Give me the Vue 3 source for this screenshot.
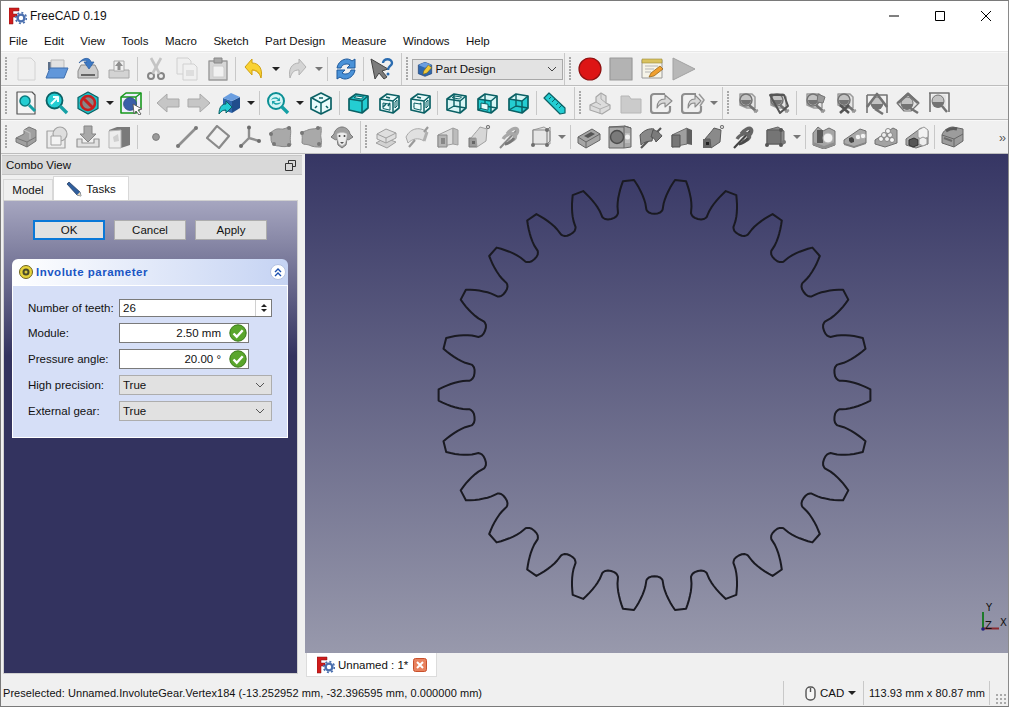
<script setup>
const P = (d, f = 'none', s = 'none', w = 1, da = null) => ({ d, f, s, w, da })
const C = (x, y, r) => `M${x - r} ${y}a${r} ${r} 0 1 0 ${2 * r} 0a${r} ${r} 0 1 0 ${-2 * r} 0z`

const T = '#24cdd2', TD = '#0b6165', G1 = '#e4e4e4', G2 = '#c2c2c2', G3 = '#9a9a9a', G4 = '#737373', G5 = '#555'

const view = (faces, wire = false) => {
  const F = 'M3 8L16 10V22L3 19z', Tp = 'M3 8L10 3L22 5L16 10z', R = 'M16 10L22 5V17L16 22z'
  const back = wire ? [P('M10 3V15L3 19M10 15L22 17', 'none', TD, 1.4)] : []
  const inner = {
    F: P(F, T), T: P(Tp, T), R: P(R, T),
    f: P('M6 12l7 1.2v6L6 17.5z', '#e9fbfb', TD, 1), t: P('M8 6.6l2.6-1.6 7 1-2.4 2z', '#e9fbfb', TD, 1),
    r: P('M18 11l2-2v6l-2 2z', '#e9fbfb', TD, 1),
    x: P('M6 16l3-3M13 12l-2 3M9 6l4 1', 'none', TD, 1.6)
  }
  return [P(F, wire ? '#d8f6f6' : '#eafafa'), P(Tp, wire ? '#d8f6f6' : '#eafafa'), P(R, wire ? '#d8f6f6' : '#eafafa'),
    ...faces.map(k => inner[k]), ...back,
    P('M3 8L10 3L22 5V17L16 22L3 19z', 'none', TD, 1.7), P('M3 8L16 10L22 5M16 10V22', 'none', TD, 1.5)]
}
const attach = (shape) => [P('M4 3h12l3 3v11h-8l-7-3z', G1, G3, 1.5), P(C(10, 9, 6), G2, G4, 1.5), P('M5 9h10a5 5 0 0 1-10 0z', G4), P('M13 14l8 7', 'none', G4, 2.5), P('M18 21l4-2', 'none', G3, 2), ...shape]

const icons = {
  new: [P('M4 1h13l4 4v18H4z', '#efefef', '#d2d2d2')],
  open: [P('M3 5h6l2 2h8v6H3z', '#5d6f88'), P('M6 3h13v9H6z', '#e2e2e2', '#bbb'), P('M1 21l4-10h18l-4 10z', '#6197da', '#3f6fae')],
  save: [P('M2 14l3-6h14l3 6v7H2z', '#cdcdcd', '#8a8a8a'), P('M5 17h14v2H5z', '#666'), P('M3 6C7 0 14 0 15 5h3l-5 7-5-7h3C10 3 6 3 3 6z', '#3b78c4', '#2a5a9c', .7)],
  print: [P('M2 13h20v8H2z', '#d3d3d3', '#a8a8a8'), P('M7 4h10v10H7z', '#f0f0f0', '#aaa'), P('M12 4l-4 5h2.5v4h3V9H16z', '#8e8e8e')],
  cut: [P(C(7, 19, 3), 'none', '#858585', 2), P(C(17, 19, 3), 'none', '#858585', 2), P('M8.5 16.5L17 1', 'none', '#c4c4c4', 2.6), P('M15.5 16.5L7 1', 'none', '#c4c4c4', 2.6)],
  copy: [P('M2 1h11l3 3v13H2z', '#efefef', '#d0d0d0'), P('M8 7h11l3 3v13H8z', '#f0f0f0', '#d0d0d0'), P('M11 13h8v6h-8z', '#dedede')],
  paste: [P('M3 4h18v19H3z', '#d6d6d6', '#9a9a9a', 1.4), P('M8 1h8v5H8z', '#a8a8a8', '#888'), P('M7 9h10l1 2v9H7z', '#f1f1f1', '#ccc')],
  undo: [P('M3 10L10 2v4c7 0 11 6 9 15-2-6-4-8-9-8v5z', '#f9d232', '#cfa011'), P('M10 13c3 0 6 2 8 5', 'none', '#e0b020', 1)],
  redo: [P('M21 10L14 2v4c-7 0-11 6-9 15 2-6 4-8 9-8v5z', '#d4d4d4', '#b2b2b2')],
  refresh: [P('M3 11C4 5 9 2 13 2c2 0 4 1 5 2l3-2v9h-8l3-3c-3-2-8-1-9 3z', '#4a92d8', '#1f5a9c'), P('M21 13c-1 6-6 9-10 9-2 0-4-1-5-2l-3 2v-9h8l-3 3c3 2 8 1 9-3z', '#4a92d8', '#1f5a9c')],
  whats: [P('M1 2l4 20 4-6 5 6 3-2-5-6 6-2z', '#7c7c7c', '#444'), P('M13 6c0-5 9-5 9 0 0 3-4 3-4 7', 'none', '#2b6cb0', 2.4), P(C(18, 17, 1.5), '#2b6cb0')],
  record: [P(C(12, 12, 11), '#dd1515', '#8e1010', 1.2)],
  stop: [P('M1 1h22v22H1z', '#b3b3b3', '#9a9a9a', 1.2)],
  macro: [P('M2 3h20v18H2z', '#f6f4e8', '#9a9a9a'), P('M2 2h20v4H2z', '#d9c25f', '#9c8a3a', .6), P('M5 9h13M5 12h9M5 15h6', 'none', '#b5b5b5', 1), P('M9 20l2-4 9-7 3 3-9 7z', '#f0a030', '#8a5a10', .7)],
  play: [P('M2 1l22 11L2 23z', '#b8b8b8', '#a2a2a2')],

  fitdoc: [P('M3 1h15l3 3v19H3z', '#f4f4f4', '#555', 1.2), P(C(11, 10, 5), T, '#0a7a7e', 1.5), P('M15 14l6 6', 'none', '#12a0a5', 3)],
  fitsel: [P(C(9.5, 9.5, 8), T, TD, 1.8), P('M6 13l7-7M8 6h5v5', 'none', '#f2ffff', 2), P('M15 15l7 7', 'none', '#15a0a5', 3.4)],
  draw: [P('M12 1l10 5.5v11L12 23 2 17.5v-11z', '#1ec0c6', TD, 1.2), P(C(12, 12, 7), '#888', '#c81e1e', 2.6), P('M7 7l10 10', 'none', '#c81e1e', 3)],
  selbox: [P('M2 6l5-4h15v15l-5 5H2z', '#eef', '#17981c', 1.6), P('M2 6h15v16M17 6l5-4', 'none', '#17981c', 1.4), P(C(11, 13, 6.5), '#3a5fa8', '#223a6c', .6), P('M14 13l9 5-4 1 3 4-2 1-3-4-2 3z', '#fff', '#555', .9)],
  back: [P('M1 12l10-9v5h12v8H11v5z', '#c6c6c6', '#a9a9a9')],
  fwd: [P('M23 12L13 3v5H1v8h12v5z', '#c6c6c6', '#a9a9a9')],
  stdview: [P('M5 7l9 3v12l-9-3z', '#2f68ae'), P('M14 10l8-4v11l-8 5z', '#214e8c'), P('M5 7l8-5 9 4-8 4z', '#6a9ee0'), P('M1 23c0-7 3-10 7-10v-3l6 6-6 6v-3c-3 0-5 1-7 4z', T, TD, 1)],
  sync: [P(C(10, 10, 8), '#d4f5f5', '#0b8f94', 2), P('M5 9c1-3 6-4 8-1l1-2v4h-4l2-1c-2-2-5-1-7 0z', '#1ba5aa'), P('M15 11c-1 3-6 4-8 1l-1 2v-4h4l-2 1c2 2 5 1 7 0z', '#1ba5aa'), P('M15.5 15.5l6.5 6.5', 'none', '#15a0a5', 3.4)],
  iso: [P('M12 2l10 5v11l-10 5-10-5V7z', '#e9fbfb', TD, 1.7), P('M3 7l9 5 9-5M12 12v10', 'none', TD, 1.5), P('M6 17l2-2M17 15l2 2M10 7l4 0', 'none', TD, 1.6)],
  front: view(['F', 'T', 'R', 't']),
  top: view(['f', 'r', 'x']),
  right: view(['r', 'x', 'f']),
  rear: view(['t'], true),
  bottom: [...view(['F'], true), P('M6 12l7 1.2v6L6 17.5z', '#e9fbfb', TD, 1)],
  left: view(['R', 'F'], true),
  measure: [P('M1 7l5-5 16 15v5l-5 1z', T, TD, 1.2), P('M6 8l2-2M9 11l3-3M13 14l2-2M16 17l3-3', 'none', TD, 1)],

  lbody: [P('M2 14l6-3V6l5-4 5 3v7l4 2v4l-8 5-12-4z', '#dcdcdc', '#a8a8a8', 1.2), P('M2 14l10 4 10-4M12 18v5M8 11l5 3M13 2v6l5 4', 'none', '#a8a8a8', .9)],
  folder: [P('M2 5h8l2 3h10v14H2z', '#cbcbcb', '#b6b6b6')],
  link: [P('M4 3h11M4 3a3 3 0 0 0-3 3v13a3 3 0 0 0 3 3h13a3 3 0 0 0 3-3v-4', 'none', '#8e8e8e', 2.2), P('M7 17c0-6 3-9 8-9V4l7 6-7 6v-4c-4 0-6 1-8 5z', '#d7d7d7', '#8a8a8a', 1.1)],
  linkx: [P('M4 3h11M4 3a3 3 0 0 0-3 3v13a3 3 0 0 0 3 3h13a3 3 0 0 0 3-3v-4', 'none', '#8e8e8e', 2.2), P('M7 17c0-6 3-9 7-9V4l6 6-6 6v-4c-4 0-5 1-7 5z', '#d7d7d7', '#8a8a8a', 1.1), P('M18 3l5 6-4 6', 'none', '#9a9a9a', 1.6)],
  at1: attach([]),
  at2: attach([P('M3 4h14l4 11-8 7z', 'none', G5, 2)]),
  at3: attach([P('M15 3l7 3-2 6-6-1z', G3, G4, 1)]),
  at4: attach([P('M6 14l9 8M15 14l-9 8', 'none', G5, 2.6)]),
  at5: [P('M2 4h20v18', 'none', G4, 1.6), P('M2 22V4', 'none', G4, 1.6), P(C(12, 12, 6), G2, G4, 1), P('M6 13h12a6 6 0 0 1-12 0z', G4), P('M2 16L12 3l10 13', 'none', G4, 2.6), P('M10 18l8 5', 'none', G4, 2.5)],
  at6: [P('M1 12L12 2l11 10-8 8H8z', G1, G4, 1.2), P(C(11, 12, 6), G2, G4, 1), P('M5 13h12a6 6 0 0 1-12 0z', G4), P('M2 12L12 3l10 9', 'none', G4, 2.6), P('M14 17l8 5', 'none', G4, 2.5)],
  at7: [P('M2 2h20v19', 'none', G4, 1.6), P('M3 2v19', 'none', G4, 1.6), P('M5 4h14v12H5z', G1), P(C(11, 10, 6), G2, G4, 1), P('M5 11h12a6 6 0 0 1-12 0z', G4), P('M15 15l5 6', 'none', G4, 2.5)],

  dbody: [P('M2 13l8-4V5l5-3 7 3v11l-9 6-11-5z', '#a0a0a0', '#777', 1), P('M2 13l11 4 9-5M13 17v5', 'none', '#777', 1), P('M10 5l6 3v6', 'none', '#c0c0c0', 1.2)],
  part: [P('M2 6h15l3 3v14H2z', '#ececec', '#a2a2a2', 1.2), P(C(15, 9, 7), '#dedede', '#a2a2a2', 1.2), P('M6 11h10v9H6z', '#f4f4f4', '#a2a2a2', 1)],
  import: [P('M1 14v8h22v-8h-5v4H6v-4z', '#e2e2e2', '#969696', 1.2), P('M8 1h8v8h4l-8 8-8-8h4z', '#a8a8a8', '#858585', 1)],
  clone: [P('M2 5l8-3h13v18l-9 3H2z', '#7a7a7a'), P('M2 6l12-1v18H2z', '#ededed', '#b5b5b5'), P('M6 12l5-3 1 7-5 1z', '#cfcfcf')],
  point: [P(C(12, 12, 3.4), '#9a9a9a', '#7d7d7d')],
  line: [P('M3 21L21 3', 'none', '#909090', 2.6), P(C(3, 21, 2), '#777'), P(C(21, 3, 2), '#777')],
  diamond: [P('M11 1L23 11 13 23 1 13z', 'none', '#8a8a8a', 2.2), P('M11 5L19 11.5 13 19 5 13z', '#f1f1f1')],
  csys: [P('M12 13V2M12 13l-8 8M12 13l10 3', 'none', '#8f8f8f', 2.4), P(C(12, 2.5, 2), '#6d6d6d'), P(C(4, 21, 2), '#6d6d6d'), P(C(22, 16, 2), '#6d6d6d')],
  shape1: [P('M2 8c3-2 6-5 10-4s7-2 10-2c2 6-1 10 1 18-4 2-8 2-12 1-3 0-6-1-7-3-2-3 0-7-2-10z', '#a9a9a9', '#8a8a8a'), P(C(3, 9, 2), '#777'), P(C(21, 3, 2), '#777'), P(C(21, 20, 2), '#777'), P(C(6, 19, 2), '#777')],
  shape2: [P('M2 7c4 0 7-3 11-3 3 0 6-1 9-2 1 5-1 8 0 11 1 4 0 6 0 9-5 0-8 0-12-2-3-1-5 0-7-2 0-4 1-7-1-11z', '#a9a9a9', '#8a8a8a'), P(C(3, 8, 2), '#777'), P(C(19, 3, 2), '#777'), P(C(20, 19, 2), '#777')],
  sheep: [P('M4 9c1-5 5-7 8-7s7 2 8 7l3 3-3 2c-1 1-2 1-3 0l-1 6-4 3-4-3-1-6c-1 1-2 1-3 0l-3-2z', '#a0a0a0', '#777'), P('M7 9c2-2 8-2 10 0 0 4-1 7-2 10l-3 2-3-2c-1-3-2-6-2-10z', '#ededed', '#bbb', .6), P(C(9.5, 11, 1), '#444'), P(C(14.5, 11, 1), '#444'), P('M10 17h4l-2 2z', '#555')],

  lpad: [P('M2 18l9-5 11 4-9 6z', '#d2d2d2', '#9f9f9f'), P('M3 9l9-5 10 4v5l-10 5-9-4z', '#dfdfdf', '#9f9f9f'), P('M3 9l9 4 10-5M12 13v5', 'none', '#9f9f9f', 1)],
  lrev: [P('M1 12C6 2 16 2 22 7l-3 9c-6-4-12-2-16 2z', '#e0e0e0', '#a8a8a8'), P('M4 22l6-7M19 7l4-5', 'none', '#9a9a9a', 2.2), P('M22 7l-3 9', 'none', '#b0b0b0', 3)],
  lloft: [P('M2 10l15-7v16l-15 3z', '#dcdcdc', '#a0a0a0'), P('M17 3l5 2v15l-5-1z', '#bcbcbc', '#a0a0a0'), P('M2 10h9v12H2z', '#b5b5b5', '#888'), P('M5 13h4v6H5z', '#878787')],
  lpipe: [P('M2 13h8v9H2z', '#9b9b9b', '#777'), P('M4 13c4-5 7-8 9-11l7 2-1 12-9 6-1-9z', '#d7d7d7', '#a0a0a0'), P('M5 16h3v3H5z', '#666'), P(C(21, 2, 1.7), '#d0d0d0', '#777')],
  lhelix: [P('M2 23l18-19', 'none', '#8a8a8a', 2), P('M5 14c3-5 10-7 12-4s-3 7-7 6M9 9c3-4 8-7 10-5s-1 7-4 8', 'none', '#a8a8a8', 3.2), P('M7 19c3 0 7-3 9-6', 'none', '#777', 3)],
  lprim: [P('M4 5l11-3 6 4v13H4z', '#e2e2e2', '#9c9c9c'), P('M4 5h14v14H4z', '#e6e6e6', '#8a8a8a', 1.2), P('M18 5l3-3v14l-3 3', 'none', '#8a8a8a', 1), P(C(4, 20, 2), '#6e6e6e'), P(C(18, 20, 2), '#6e6e6e'), P(C(18, 5, 2), '#6e6e6e')],
  dpocket: [P('M1 12L15 4l8 5v6L9 23l-8-5z', '#a5a5a5', '#666'), P('M1 12l8 5 14-8M9 17v6', 'none', '#666', 1), P('M7 11l7-4 4 2-7 4z', '#555')],
  dhole: [P('M1 2l16-1 6 2v19l-7 1H1z', '#a9a9a9', '#666'), P('M1 2h15v21', 'none', '#666', 1), P('M16 1l7 2', 'none', '#666', 1), P(C(9, 12, 6.5), '#7a7a7a', '#4d4d4d', 1.4), P('M17 8h5v10h-5z', '#bdbdbd'), P(C(19.5, 12, 2.5), '#f0f0f0')],
  dgroove: [P('M2 23l20-20', 'none', '#555', 2.2), P('M1 10c4-5 10-7 14-6l-2 12c-4 0-8 1-11 4z', '#888', '#555'), P('M14 5c3 0 7 3 9 6l-6 6c-1-3-3-5-5-5z', '#7a7a7a', '#555')],
  dloft: [P('M2 10l15-7v16l-15 3z', '#9f9f9f', '#6d6d6d'), P('M17 3l5 2v15l-5-1z', '#5f5f5f'), P('M2 10h8v12H2z', '#777', '#555')],
  dpipe: [P('M2 14h8v9H2z', '#666'), P('M4 14c4-5 7-8 9-11l7 2-1 12-9 6-1-9z', '#8a8a8a', '#5a5a5a'), P('M5 17h3v3H5z', '#222'), P(C(21, 2, 1.7), '#d0d0d0', '#777')],
  dhelix: [P('M2 23l18-19', 'none', '#444', 2.2), P('M5 14c3-5 10-7 12-4s-3 7-7 6M9 9c3-4 8-7 10-5s-1 7-4 8', 'none', '#666', 3.4), P('M7 19c3 0 7-3 9-6', 'none', '#4a4a4a', 3)],
  dprim: [P('M4 5l11-3 6 4v13H4z', '#8d8d8d', '#666'), P('M4 5h14v14H4z', '#757575', '#5a5a5a', 1), P(C(4, 20, 2), '#555'), P(C(18, 20, 2), '#555'), P(C(18, 5, 2), '#555'), P(C(21, 17, 2), '#777')],
  b1: [P('M1 20V8l5-6 5 4 6-3 6 3v14l-11 4z', '#a6a6a6', '#707070'), P('M5 5h6v13H5z', '#585858'), P(C(16, 13, 5), '#f0f0f0', '#b0b0b0'), P('M1 17l11 4 11-4v3l-11 4-11-4z', '#8f8f8f')],
  b2: [P('M1 15l16-11 6 2v12L11 22 1 19z', '#a8a8a8', '#707070'), P('M6 13l3-1 2 2v3l-3 1-2-2z', '#444'), P(C(15, 12, 2.8), '#f3f3f3', '#aaa'), P(C(20, 11, 2.8), '#f3f3f3', '#aaa'), P('M1 18l10 3 12-4v2l-12 4-10-3z', '#858585')],
  b3: [P('M1 15L19 3l4 2v13l-12 4-10-3z', '#a3a3a3', '#707070'), P(C(7, 14, 2.5), '#f5f5f5', '#888'), P(C(13, 14, 2.5), '#efefef', '#888'), P(C(10, 10, 2.5), '#efefef', '#888'), P(C(16, 10, 2.5), '#efefef', '#888'), P(C(18, 15, 2.5), '#f5f5f5', '#888'), P(C(14, 6, 2.5), '#f5f5f5', '#888')],
  b4: [P('M1 14L16 3l7 3v13l-12 4-10-3z', '#a8a8a8', '#707070'), P('M13 5l6-3 4 3v7l-6 3-4-3z', '#f2f2f2', '#999'), P('M4 15l5-2 4 2v5l-5 2-4-2z', '#555', '#333'), P('M14 14l4-2 4 2v5l-4 2-4-2z', '#eee', '#999')],
  b5: [P('M1 10C2 6 7 2 12 2l10 2v12l-9 6-12-4z', '#9c9c9c', '#666'), P('M1 10l12 4 9-5', 'none', '#666', 1), P('M13 14v8', 'none', '#666', 1), P('M5 6c3-2 7-3 11-2', 'none', '#5a5a5a', 3), P('M3 13l8 3', 'none', '#6a6a6a', 2)]
}

const row = (str) => str.trim().split(/\s+/)
const rows = [
  [
    { items: row('new open save print | cut copy paste | undo v redo vd | refresh | whats'), cls: 'pad4' },
    { combo: true, cls: 'pad2' },
    { items: row('record stop macro play'), cls: 'grow' }
  ],
  [
    { items: row('fitdoc fitsel draw v selbox | back fwd stdview v | sync v iso | front top right | rear bottom left | measure'), cls: 'pad4' },
    { items: row('lbody folder link linkx vd'), cls: 'pad2' },
    { items: row('at1 at2 | at3 at4 at5 at6 at7'), cls: 'grow' }
  ],
  [
    { items: row('dbody part import clone | point line diamond csys shape1 shape2 sheep'), cls: 'pad3' },
    { items: row('lpad lrev lloft lpipe lhelix lprim vd | dpocket dhole dgroove dloft dpipe dhelix dprim vd | b1 b2 b3 b4 | b5'), cls: 'grow', more: true }
  ]
]

const menus = ['File', 'Edit', 'View', 'Tools', 'Macro', 'Sketch', 'Part Design', 'Measure', 'Windows', 'Help']

// 26-tooth involute outline, module 2.5, 20 degree pressure angle
const cx = 349.5, cy = 241, Ro = 216, N = 26
const half = 180 / N
const Rp = Ro * 32.5 / 35, Rb = Rp * Math.cos(Math.PI / 9)
const inv = r => { const a = Math.acos(Rb / r); return (Math.tan(a) - a) * 180 / Math.PI }
const a0 = 90 / N + inv(Rp)
const flank = [[Rb - 3, a0 + .1], [Rb, a0], [192, a0 - inv(192)], [196, a0 - inv(196)], [200, a0 - inv(200)], [204, a0 - inv(204)], [208, a0 - inv(208)], [212, a0 - inv(212)], [Ro, a0 - inv(Ro)]]
const profile = [[181.3, -half], [181.6, -5.9], [182.6, -5.15], [184.2, -4.65],
  ...flank.map(([r, a]) => [r, -a]), ...flank.slice().reverse(),
  [184.2, 4.65], [182.6, 5.15], [181.6, 5.9]]
const pts = []
for (let k = 0; k < N; k++) {
  const c = (k + .5) * 2 * half
  for (const [r, a] of profile) {
    const t = (c + a) * Math.PI / 180
    pts.push(`${(cx + r * Math.sin(t)).toFixed(1)},${(cy - r * Math.cos(t)).toFixed(1)}`)
  }
}
const gear = pts.join(' ')
const fields = [
  { label: 'High precision:', value: 'True' },
  { label: 'External gear:', value: 'True' }
]
const quants = [
  { label: 'Module:', value: '2.50 mm' },
  { label: 'Pressure angle:', value: '20.00 °' }
]
</script>

<template>
  <div class="win">
    <div class="title">
      <svg class="logo" width="18" height="18" viewBox="0 0 18 18">
        <path d="M0 1h10v3H4v3h4v3H4v7H0z" fill="#d01c1c" stroke="#7d1010" stroke-width=".5" />
        <circle cx="12" cy="11" r="3.4" fill="#fff" stroke="#4a6fae" stroke-width="2.4" />
        <circle cx="12" cy="11" r="5.4" fill="none" stroke="#4a6fae" stroke-width="1.6" stroke-dasharray="2 2.2" />
      </svg>
      <span class="title-text">FreeCAD 0.19</span>
      <div class="caption">
        <svg width="12" height="12" viewBox="0 0 12 12"><path d="M1 6h10" stroke="#000" /></svg>
        <svg width="12" height="12" viewBox="0 0 12 12"><path d="M1.500 1.500h9v9h-9z" stroke="#000" fill="none" /></svg>
        <svg width="12" height="12" viewBox="0 0 12 12"><path d="M1 1l10 10M11 1L1 11" stroke="#000" fill="none" /></svg>
      </div>
    </div>
    <div class="menu"><span v-for="m in menus" :key="m">{{ m }}</span></div>

    <div v-for="(r, ri) in rows" :key="ri" class="tbrow">
      <div v-for="(tb, ti) in r" :key="ti" class="tb" :class="tb.cls">
        <i class="grip"></i>
        <div v-if="tb.combo" class="wb">
          <svg width="16" height="16" viewBox="0 0 24 24">
            <path d="M2 6l10-4 10 4v13l-10 4-10-4z" fill="#2f68ae" stroke="#1c3d70" />
            <path d="M2 6l10 4 10-4-10-4z" fill="#6a9ee0" />
            <path d="M10 15l7-9 5 4-7 8-6 2z" fill="#f0c93a" stroke="#6b5a14" stroke-width=".8" />
          </svg>
          <span>Part Design</span>
          <svg class="chev" width="10" height="6" viewBox="0 0 10 6"><path d="M1 1l4 4 4-4" fill="none" stroke="#444" /></svg>
        </div>
        <template v-for="(it, ii) in tb.items" :key="ii">
          <i v-if="it === '|'" class="sep"></i>
          <span v-else-if="it === 'v' || it === 'vd'" class="drop" :class="{ faded: it === 'vd' }"></span>
          <span v-else class="btn">
            <svg width="24" height="24" viewBox="0 0 24 24">
              <path v-for="(p, pi) in icons[it]" :key="pi" :d="p.d" :fill="p.f" :stroke="p.s" :stroke-width="p.w" :stroke-dasharray="p.da" stroke-linejoin="round" />
            </svg>
          </span>
        </template>
        <span v-if="tb.more" class="more">››</span>
      </div>
    </div>

    <div class="main">
      <aside class="left">
        <div class="dock-title">
          <span>Combo View</span>
          <svg width="11" height="11" viewBox="0 0 11 11"><path d="M3.500 3V.5h7v6H8M.5 3.500h7v7h-7z" fill="none" stroke="#333" /></svg>
        </div>
        <div class="tabs">
          <span class="tab">Model</span>
          <span class="tab on">
            <svg width="16" height="16" viewBox="0 0 16 16">
              <path d="M1 3l2-2 11 10 1 4-4-1z" fill="#2f5f9e" stroke="#1c3358" stroke-width=".7" />
              <path d="M11 14l3-3 1 4z" fill="#e8d8b8" />
            </svg>
            Tasks
          </span>
        </div>
        <div class="panel">
          <div class="dlg">
            <button class="b def">OK</button>
            <button class="b">Cancel</button>
            <button class="b">Apply</button>
          </div>
          <section class="box">
            <header class="box-h">
              <svg width="16" height="16" viewBox="0 0 16 16">
                <circle cx="8" cy="8" r="6.500" fill="#e6d23a" stroke="#6e6420" />
                <circle cx="8" cy="8" r="3.500" fill="#4a4a2a" />
                <circle cx="8" cy="8" r="1.500" fill="#d8c83a" />
              </svg>
              <b>Involute parameter</b>
              <span class="collapse">
                <svg width="10" height="10" viewBox="0 0 10 10"><path d="M2 5l3-3 3 3M2 9l3-3 3 3" fill="none" stroke="#1a4fb0" stroke-width="1.400" /></svg>
              </span>
            </header>
            <div class="form">
              <label>Number of teeth:</label>
              <div class="in spin">
                <span>26</span>
                <span class="arrows"><i class="up"></i><i class="dn"></i></span>
              </div>
              <template v-for="q in quants" :key="q.label">
                <label>{{ q.label }}</label>
                <div class="in q">
                  <span>{{ q.value }}</span>
                  <svg width="18" height="18" viewBox="0 0 18 18">
                    <circle cx="9" cy="9" r="8.200" fill="#5aa62c" stroke="#3a7a1a" />
                    <path d="M4.500 9.500l3.200 3.200 6-6.500" fill="none" stroke="#fff" stroke-width="2.400" />
                  </svg>
                </div>
              </template>
              <template v-for="f in fields" :key="f.label">
                <label>{{ f.label }}</label>
                <div class="in sel">
                  <span>{{ f.value }}</span>
                  <svg width="10" height="6" viewBox="0 0 10 6"><path d="M1 1l4 4 4-4" fill="none" stroke="#555" /></svg>
                </div>
              </template>
            </div>
          </section>
        </div>
      </aside>

      <div class="center">
        <div class="viewport">
          <svg width="703" height="499" viewBox="0 0 703 499">
            <polygon :points="gear" fill="none" stroke="#1a1a22" stroke-width="2" stroke-linejoin="round" />
            <path d="M678 458v17" stroke="#1d7a2a" stroke-width="2" />
            <path d="M678 474.500h16" stroke="#8a2a30" stroke-width="2" />
            <circle cx="678" cy="475" r="1.800" fill="#20207a" />
            <text x="681" y="457" class="axis">Y</text>
            <text x="680" y="475" class="axis">Z</text>
            <text x="695" y="472" class="axis">X</text>
          </svg>
        </div>
        <div class="doctabs">
          <span class="doctab">
            <svg width="18" height="18" viewBox="0 0 18 18">
              <path d="M0 1h10v3H4v3h4v3H4v7H0z" fill="#d01c1c" stroke="#7d1010" stroke-width=".5" />
              <circle cx="12" cy="11" r="3.400" fill="#fff" stroke="#4a6fae" stroke-width="2.400" />
              <circle cx="12" cy="11" r="5.400" fill="none" stroke="#4a6fae" stroke-width="1.600" stroke-dasharray="2 2.200" />
            </svg>
            <span>Unnamed : 1*</span>
            <svg width="14" height="14" viewBox="0 0 14 14">
              <rect x=".5" y=".5" width="13" height="13" rx="2" fill="#e8825e" stroke="#c8502c" />
              <path d="M4 4l6 6M10 4l-6 6" stroke="#fff" stroke-width="2" />
            </svg>
          </span>
        </div>
      </div>
    </div>

    <footer class="status">
      <span class="msg">Preselected: Unnamed.InvoluteGear.Vertex184 (-13.252952 mm, -32.396595 mm, 0.000000 mm)</span>
      <span class="cell nav">
        <svg width="11" height="15" viewBox="0 0 11 15"><rect x="1" y="1" width="9" height="13" rx="4" fill="#f6f6f6" stroke="#555" stroke-width="1.400" /><path d="M5.500 2v4" stroke="#555" stroke-width="1.400" /></svg>
        CAD
        <i class="caret"></i>
      </span>
      <span class="cell size">113.93 mm x 80.87 mm</span>
      <span class="sizegrip"></span>
    </footer>
  </div>
</template>

<style>
html, body { margin: 0; padding: 0; background: #f0f0f0; overflow: hidden; }
</style>

<style scoped>
.win {
  width: 1009px; height: 707px; box-sizing: border-box; border: 1px solid #7a7a7a; border-right-color: #8a8a8a;
  display: flex; flex-direction: column; background: #f0f0f0; overflow: hidden;
  font: 11.500px/16px "Liberation Sans", "Noto Sans CJK JP", sans-serif; color: #111;
}
.title { height: 30px; flex: none; background: #fff; display: flex; align-items: center; padding-left: 8px; }
.logo { margin-right: 3px; }
.title-text { color: #111; font-size: 12px; }
.caption { margin-left: auto; display: flex; gap: 34px; padding-right: 16px; }
.menu { height: 21px; flex: none; background: #fff; display: flex; gap: 16.500px; padding-left: 8px; align-items: center; border-bottom: 1px solid #e8e8e8; box-sizing: border-box; }
.tbrow { height: 34px; flex: none; display: flex; box-sizing: border-box; border-bottom: 1px solid #bdbdbd; border-top: 1px solid #f8f8f8; background: #f0f0f0; }
.tb { display: flex; align-items: center; border-right: 1px solid #c8c8c8; height: 100%; flex: none; }
.pad4 { padding-right: 3.500px; }
.pad3 { padding-right: 2.500px; }
.pad2 { padding-right: 1.500px; }
.grow { flex: 1; border-right: 0; position: relative; }
.grip { width: 9.500px; flex: none; height: 24px; box-sizing: border-box; padding: 0; background: radial-gradient(circle at 1px 1px, #a8a8a8 .8px, transparent 1px) 4px 0 / 3px 3px repeat-y; }
.btn { width: 31px; flex: none; height: 24px; display: flex; justify-content: center; }
.sep { width: 5.500px; flex: none; height: 24px; background: linear-gradient(#c8c8c8, #c8c8c8) center / 1px 100% no-repeat; }
.drop { width: 12px; flex: none; height: 4px; position: relative; }
.drop::after { content: ""; position: absolute; left: 2px; top: 0; border: 4px solid transparent; border-top: 4px solid #222; border-bottom: 0; }
.drop.faded::after { border-top-color: #777; }
.more { position: absolute; right: 3px; top: 9px; font-size: 12px; letter-spacing: -1px; color: #555; }
.wb { width: 151px; height: 21px; box-sizing: border-box; flex: none; border: 1px solid #a8a8a8; background: #e3e3e3; display: flex; align-items: center; padding-left: 4px; gap: 3px; }
.wb .chev { margin-left: auto; margin-right: 5px; }

.main { flex: 1; display: flex; min-height: 0; }
.left { width: 304px; flex: none; display: flex; flex-direction: column; }
.dock-title { height: 18px; margin: 1px 3px 0 1px; flex: none; background: #d9d9d9; border: 1px solid #c6c6c6; border-width: 1px 0; box-sizing: content-box; display: flex; align-items: center; justify-content: space-between; padding: 0 6px 0 4px; }
.tabs { height: 25px; flex: none; display: flex; align-items: flex-end; padding: 0 0 0 2px; margin-top: 0; box-sizing: content-box; }
.tab { height: 21px; width: 50px; box-sizing: border-box; border: 1px solid #d8d8d8; border-bottom: 0; background: #f0f0f0; display: flex; align-items: center; justify-content: center; }
.tab.on { height: 24px; width: 76px; background: #fff; gap: 4px; }
.panel { width: 295px; margin-left: 2px; box-sizing: border-box; height: 474px; flex: none; border: 1px solid #fff; outline: 1px solid #d0d0d0; outline-offset: -1px; background: linear-gradient(#a6a6c0, #33335f 155px); background-clip: padding-box; }
.dlg { display: flex; gap: 9px; padding: 19px 0 0 29px; }
.b { width: 72px; height: 20px; box-sizing: border-box; border: 1px solid #adadad; background: #e1e1e1; font: inherit; color: #111; padding: 0; }
.b.def { border: 2px solid #0a78d7; }
.box { margin: 19px 0 0 8px; width: 276px; }
.box-h { height: 26px; box-sizing: border-box; border-radius: 6px 6px 0 0; background: linear-gradient(90deg, #fff, #c5d3f3); display: flex; align-items: center; padding-left: 6px; gap: 2px; color: #1a55c4; letter-spacing: .5px; }
.box-h b { font-weight: 700; }
.collapse { margin-left: auto; margin-right: 2px; width: 16px; height: 16px; border-radius: 50%; background: #fff; border: 1px solid #b5c3e3; box-sizing: border-box; display: flex; align-items: center; justify-content: center; }
.form { display: grid; grid-template-columns: 91px 153px; grid-template-rows: 18px repeat(4, 20px); row-gap: 6px; align-items: center; padding: 13px 16px 16px 15px; background: #d6dff7; border: 1px solid #fff; border-top-color: #fff; }
.form label { white-space: nowrap; }
.in { height: 100%; box-sizing: border-box; border: 1px solid #7a7a7a; background: #fff; display: flex; align-items: center; padding: 0 3px; }
.spin { justify-content: space-between; padding-right: 0; }
.arrows { width: 15px; height: 100%; display: flex; flex-direction: column; align-items: center; justify-content: center; gap: 2px; border-left: 1px solid #d0d0d0; }
.arrows i { width: 0; height: 0; border: 3.500px solid transparent; }
.up { border-bottom-color: #222 !important; border-top: 0 !important; }
.dn { border-top-color: #222 !important; border-bottom: 0 !important; }
.q { width: 130px; justify-content: flex-end; gap: 8px; padding-right: 1px; }
.sel { border-color: #adadad; background: #e1e1e1; justify-content: space-between; padding: 0 3px 0 3px; }
.sel svg { margin-right: 3px; }

.center { flex: 1; display: flex; flex-direction: column; min-width: 0; }
.viewport { height: 499px; flex: none; background: linear-gradient(#363664, #9899ac); overflow: hidden; }
.viewport svg { display: block; }
.axis { font: 10px "DejaVu Sans", sans-serif; fill: #111; }
.doctabs { flex: 1; display: flex; align-items: flex-start; padding-left: 1px; }
.doctab { width: 131px; height: 24px; box-sizing: border-box; background: #fff; border: 1px solid #dcdcdc; border-top: 0; display: flex; align-items: center; padding-left: 10px; gap: 3px; }
.doctab span { margin-right: 2px; }

.status { height: 26px; flex: none; display: flex; align-items: center; position: relative; font-size: 11px; letter-spacing: .06px; }
.msg { padding-left: 2px; width: 782px; flex: none; box-sizing: border-box; white-space: nowrap; }
.cell { height: 24px; display: flex; align-items: center; border-left: 1px solid #c9c9c9; box-sizing: border-box; white-space: nowrap; }
.nav { width: 80px; padding-left: 21px; gap: 4px; font-size: 11.500px; }
.caret { border: 4px solid transparent; border-top: 4px solid #222; border-bottom: 0; margin-left: 0; }
.size { width: 127px; padding-left: 5px; border-right: 1px solid #c9c9c9; }
.sizegrip { position: absolute; right: 2px; bottom: 2px; width: 10px; height: 10px; background: radial-gradient(circle at 1px 1px, #aaa 1px, transparent 1.2px) 0 0 / 4px 4px; }
</style>
